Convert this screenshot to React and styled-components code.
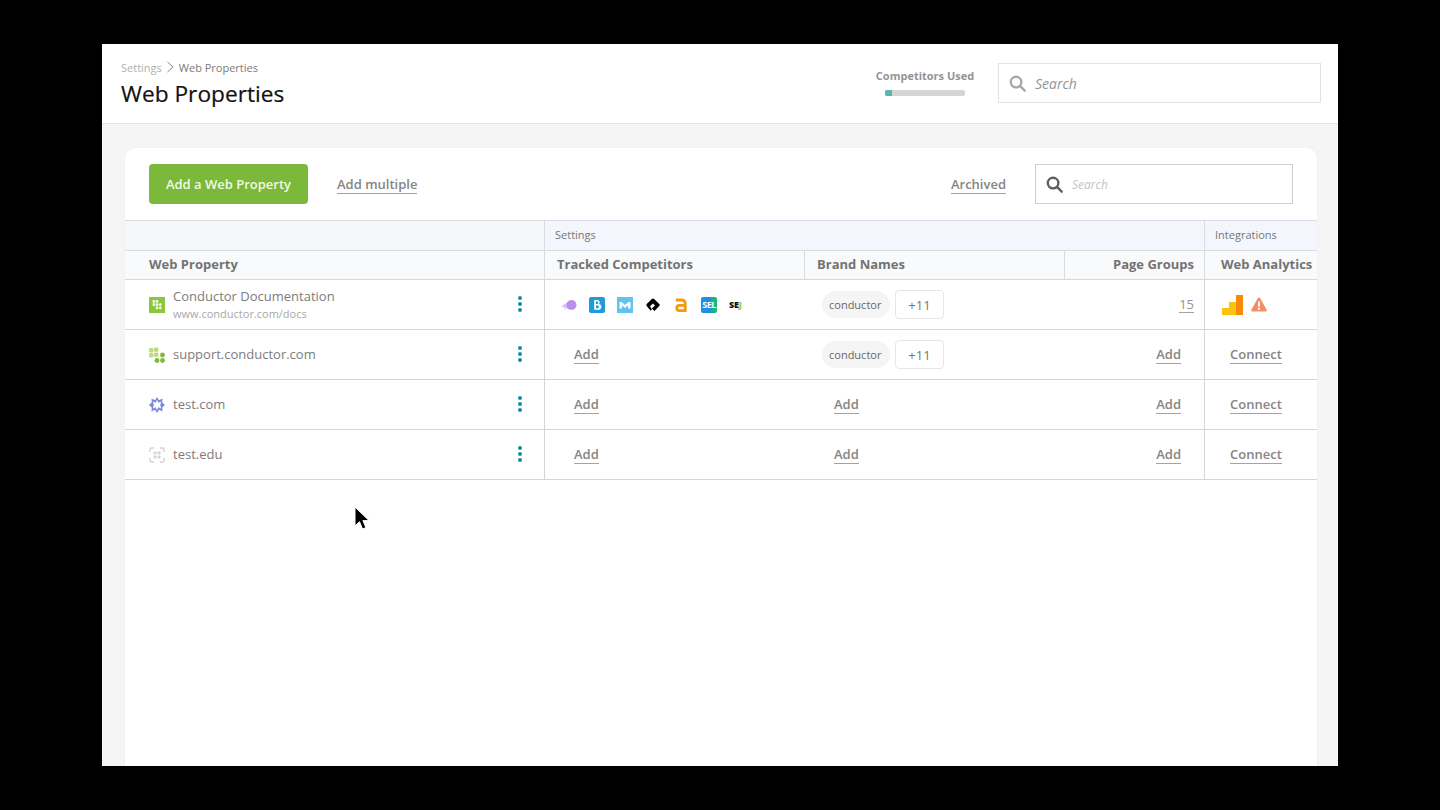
import React from 'react';
import styled, { createGlobalStyle } from 'styled-components';

const GlobalStyle = createGlobalStyle`
  html, body {
    margin: 0;
    height: 100%;
    background: #000;
    overflow: hidden;
    font-family: "Open Sans", "Liberation Sans", sans-serif;
    -webkit-font-smoothing: antialiased;
  }
  * { box-sizing: border-box; }
`;

const COLUMNS = '419px 260px 260px 140px 113px';

const rows = [
  { icon: 'square', name: 'Conductor Documentation', url: 'www.conductor.com/docs', competitors: true, brand: true, groups: '15', analytics: true },
  { icon: 'dots', name: 'support.conductor.com', brand: true },
  { icon: 'star', name: 'test.com' },
  { icon: 'frame', name: 'test.edu' },
];

const SearchIcon = ({ color, size }) => (
  <svg width={size} height={size} viewBox="0 0 18 18" fill="none" stroke={color} strokeWidth="2.5">
    <circle cx="7.5" cy="7.5" r="5.6" />
    <path d="M11.6 11.6l5 5" strokeLinecap="round" />
  </svg>
);

const PropertyIcon = ({ kind }) => {
  if (kind === 'square') {
    return (
      <svg width="16" height="16" viewBox="0 0 16 16">
        <rect width="16" height="16" fill="#8cc63f" />
        <g fill="#f1f8e4">
          <rect x="3.5" y="3" width="2.7" height="2.7" rx="0.7" />
          <rect x="6.7" y="3" width="2.7" height="2.7" rx="0.7" />
          <rect x="3.5" y="6.2" width="2.7" height="2.7" rx="0.7" />
          <rect x="6.7" y="6.2" width="2.7" height="2.7" rx="0.7" />
          <circle cx="11.3" cy="7.7" r="1.4" />
          <circle cx="8" cy="10.9" r="1.4" />
          <circle cx="11.3" cy="10.9" r="1.4" />
        </g>
      </svg>
    );
  }
  if (kind === 'dots') {
    return (
      <svg width="16" height="16" viewBox="0 0 16 16">
        <g fill="#bedb7c">
          <rect x="0" y="1" width="4.5" height="4.5" rx="1.4" />
          <rect x="5" y="0.5" width="4.5" height="4.5" rx="1.4" />
          <rect x="0" y="6" width="4.5" height="4.5" rx="1.4" />
          <rect x="5" y="5.5" width="4.5" height="4.5" rx="1.4" />
        </g>
        <g fill="#7fb83a">
          <circle cx="13.5" cy="8" r="2.4" />
          <circle cx="8" cy="13.5" r="2.4" />
          <circle cx="13.5" cy="13.5" r="2.4" />
        </g>
      </svg>
    );
  }
  if (kind === 'star') {
    return (
      <svg width="16" height="16" viewBox="0 0 16 16">
        <path d="M8 0l2 3.200L13.500 1.500l-.2 4L16 8l-2.700 2.500.2 4L10 12.800 8 16l-2-3.200-3.500 1.700.2-4L0 8l2.700-2.500-.2-4L6 3.200z" fill="#7a89dc" />
        <path d="M8 2.800l1.300 3 2.900-1.300-1 3.500 1 3.500-2.900-1.300-1.300 3-1.300-3-2.900 1.300 1-3.500-1-3.500 2.900 1.300z" fill="#fff" />
      </svg>
    );
  }
  return (
    <svg width="16" height="16" viewBox="0 0 16 16">
      <path d="M1 5V2.500A1.500 1.500 0 0 1 2.500 1H5M11 1h2.500A1.500 1.500 0 0 1 15 2.500V5M15 11v2.500a1.500 1.500 0 0 1-1.500 1.500H11M5 15H2.500A1.500 1.500 0 0 1 1 13.500V11" fill="none" stroke="#d2d2d2" strokeWidth="1.4" />
      <g fill="#d6d6d6">
        <rect x="4.500" y="4.500" width="3" height="3" rx="0.8" />
        <rect x="8.500" y="4.500" width="3" height="3" rx="0.8" />
        <rect x="4.500" y="8.500" width="3" height="3" rx="0.8" />
        <rect x="8.500" y="8.500" width="3" height="3" rx="0.8" />
      </g>
    </svg>
  );
};

const CompetitorIcons = () => (
  <IconRow>
    <svg width="16" height="16" viewBox="0 0 16 16">
      <path d="M0 9.500l6-4 3 1v5l-4-.2-2 1.700.8-2.500z" fill="#d9c2f5" />
      <circle cx="10.500" cy="8" r="5" fill="#b78ff0" />
    </svg>
    <svg width="16" height="16" viewBox="0 0 16 16">
      <rect width="16" height="16" rx="2" fill="#1f9bd7" />
      <path d="M5.200 3h3.300a2.300 2.300 0 0 1 1.500 4 2.600 2.600 0 0 1-1.200 5.800H5.200zM7 4.600v2.300h1.200a1.150 1.150 0 0 0 0-2.300zM7 8.400v2.800h1.500a1.400 1.400 0 0 0 0-2.800z" fill="#fff" fillRule="evenodd" />
    </svg>
    <svg width="16" height="16" viewBox="0 0 16 16">
      <rect width="16" height="16" fill="#62c3ee" />
      <path d="M2.500 11.500V5h2.200L8 8l3.300-3h2.200v6.500h-2.400V8.300L8 11 4.900 8.300v3.200z" fill="#fff" />
    </svg>
    <svg width="16" height="16" viewBox="0 0 16 16">
      <path d="M8 1.500c.4 0 .8.2 1.100.5l5.200 5c.6.600.6 1.400 0 2l-4.800 5-2.600-2.500L10 8.500 8 6.500 5 9.200l2 3.300-1.600 1L1.700 9c-.5-.6-.5-1.300 0-1.900L6.900 2c.3-.3.700-.5 1.100-.5z" fill="#000" />
    </svg>
    <svg width="16" height="16" viewBox="0 0 16 16" fill="none" stroke="#f7980f" strokeWidth="2.800">
      <path d="M2.800 3h6.200a3.200 3.200 0 0 1 3.200 3.200V15" />
      <path d="M12 8.300H6.500a2.700 2.700 0 0 0 0 5.400H12" />
    </svg>
    <SelBadge>SEL</SelBadge>
    <SejMark>SE<em>J</em></SejMark>
  </IconRow>
);

const AnalyticsIcons = () => (
  <IconRow $gap={8}>
    <svg width="21" height="20" viewBox="0 0 21 20">
      <rect x="0" y="13" width="7" height="7" fill="#fcc30b" />
      <rect x="7" y="7" width="7" height="13" fill="#fcc30b" />
      <rect x="14" y="0" width="7" height="20" fill="#f58a0b" />
    </svg>
    <svg width="16" height="15" viewBox="0 0 16 15">
      <path d="M8 .5a1.300 1.300 0 0 1 1.100.6l6.500 11.600a1.300 1.300 0 0 1-1.100 1.800h-13a1.300 1.300 0 0 1-1.100-1.800L6.900 1.100A1.300 1.300 0 0 1 8 .5z" fill="#f58c66" />
      <rect x="7" y="4.500" width="2" height="5.200" fill="#fff" />
      <rect x="7" y="10.800" width="2" height="2" fill="#fff" />
    </svg>
  </IconRow>
);

export default function App() {
  return (
    <>
      <GlobalStyle />
      <Frame>
        <Header>
          <TitleBlock>
            <Breadcrumb>
              <Crumb>Settings</Crumb>
              <svg width="9" height="12" viewBox="0 0 9 12" fill="none" stroke="#8a8a8a">
                <path d="M1.500 1l5.500 5-5.500 5" />
              </svg>
              <Crumb $current>Web Properties</Crumb>
            </Breadcrumb>
            <PageTitle>Web Properties</PageTitle>
          </TitleBlock>
          <HeaderRight>
            <Usage>
              <UsageLabel>Competitors Used</UsageLabel>
              <UsageTrack><UsageFill style={{ width: `${(7 / 80) * 100}%` }} /></UsageTrack>
            </Usage>
            <HeaderSearch>
              <SearchIcon color="#a8a8a8" size={17} />
              <HeaderSearchText>Search</HeaderSearchText>
            </HeaderSearch>
          </HeaderRight>
        </Header>
        <Content>
          <Card>
            <Toolbar>
              <ToolbarGroup>
                <PrimaryButton>Add a Web Property</PrimaryButton>
                <ToolbarLink>Add multiple</ToolbarLink>
              </ToolbarGroup>
              <ToolbarGroup>
                <ToolbarLink>Archived</ToolbarLink>
                <CardSearch>
                  <SearchIcon color="#5f5f5f" size={17} />
                  <CardSearchText>Search</CardSearchText>
                </CardSearch>
              </ToolbarGroup>
            </Toolbar>
            <GroupRow>
              <GroupCell $plain />
              <GroupCell $span={3}>Settings</GroupCell>
              <GroupCell>Integrations</GroupCell>
            </GroupRow>
            <ColumnRow>
              <ColumnCell $pad="0 0 2px 24px">Web Property</ColumnCell>
              <ColumnCell $pad="0 0 2px 12px">Tracked Competitors</ColumnCell>
              <ColumnCell $pad="0 0 2px 12px">Brand Names</ColumnCell>
              <ColumnCell $pad="0 10px 2px 0" $right>Page Groups</ColumnCell>
              <ColumnCell $pad="0 0 2px 16px">Web Analytics</ColumnCell>
            </ColumnRow>
            {rows.map((row) => (
              <Row key={row.name}>
                <PropertyCell>
                  <PropertyIcon kind={row.icon} />
                  <PropertyText>
                    <PropertyName>{row.name}</PropertyName>
                    {row.url && <PropertyUrl>{row.url}</PropertyUrl>}
                  </PropertyText>
                  <Kebab><i /><i /><i /></Kebab>
                </PropertyCell>
                <DataCell $pad={row.competitors ? '0 0 0 16px' : '0 0 0 29px'} $first>
                  {row.competitors ? <CompetitorIcons /> : <ActionLink>Add</ActionLink>}
                </DataCell>
                <DataCell $pad={row.brand ? '0 0 0 18px' : '0 0 0 30px'}>
                  {row.brand ? (
                    <>
                      <BrandPill>conductor</BrandPill>
                      <MoreBox>+11</MoreBox>
                    </>
                  ) : (
                    <ActionLink>Add</ActionLink>
                  )}
                </DataCell>
                <DataCell $pad={row.groups ? '0 10px 0 0' : '0 23px 0 0'} $right>
                  {row.groups ? <CountLink>{row.groups}</CountLink> : <ActionLink>Add</ActionLink>}
                </DataCell>
                <DataCell $pad={row.analytics ? '0 0 0 17px' : '0 0 0 25px'} $first>
                  {row.analytics ? <AnalyticsIcons /> : <ActionLink>Connect</ActionLink>}
                </DataCell>
              </Row>
            ))}
          </Card>
        </Content>
        <Pointer width="17" height="26" viewBox="0 0 17 26">
          <path d="M1 1v19l4.500-4.300 3 7.300 3.400-1.400-3-7H15z" fill="#000" stroke="#fff" strokeWidth="1" />
        </Pointer>
      </Frame>
    </>
  );
}

const Frame = styled.div`
  position: relative;
  display: flex;
  flex-direction: column;
  width: 1236px;
  height: 722px;
  margin: 44px 0 0 102px;
  background: #f5f5f5;
  overflow: hidden;
`;

const Header = styled.header`
  display: flex;
  justify-content: space-between;
  align-items: flex-start;
  height: 80px;
  padding: 0 17px 0 19px;
  background: #fff;
  border-bottom: 1px solid #e2e2e2;
`;

const TitleBlock = styled.div`
  display: flex;
  flex-direction: column;
  padding-top: 15px;
`;

const Breadcrumb = styled.div`
  display: flex;
  align-items: center;
  gap: 4px;
  height: 16px;
`;

const Crumb = styled.span`
  font-size: 11px;
  color: ${(props) => (props.$current ? '#7b7b7b' : '#b0b0b0')};
`;

const PageTitle = styled.h1`
  margin: 4px 0 0;
  font-size: 22.7px;
  line-height: 30px;
  font-weight: 400;
  color: #111;
  -webkit-text-stroke: 0.2px #111;
`;

const HeaderRight = styled.div`
  display: flex;
  align-items: flex-start;
  gap: 23px;
  padding-top: 19px;
`;

const Usage = styled.div`
  display: flex;
  flex-direction: column;
  align-items: center;
  width: 100px;
  padding-top: 5px;
`;

const UsageLabel = styled.div`
  font-size: 11px;
  line-height: 16px;
  font-weight: 700;
  color: #949494;
  white-space: nowrap;
`;

const UsageTrack = styled.div`
  width: 80px;
  height: 6px;
  margin-top: 6px;
  border-radius: 2px;
  background: #d5d5d5;
  overflow: hidden;
`;

const UsageFill = styled.div`
  height: 100%;
  background: #5fb3ad;
`;

const HeaderSearch = styled.div`
  display: flex;
  align-items: center;
  gap: 9px;
  width: 323px;
  height: 40px;
  padding-left: 10px;
  border: 1px solid #e1e1e6;
  background: #fff;
`;

const HeaderSearchText = styled.span`
  font-size: 14px;
  font-style: italic;
  color: #949494;
`;

const Content = styled.main`
  display: flex;
  flex: 1;
  min-height: 0;
  padding: 24px 21px 0 23px;
`;

const Card = styled.section`
  flex: 1;
  background: #fff;
  border-radius: 10px 10px 0 0;
  box-shadow: 0 0 2px rgba(0, 0, 0, 0.06);
`;

const Toolbar = styled.div`
  display: flex;
  justify-content: space-between;
  align-items: center;
  height: 72px;
  padding: 0 24px;
`;

const ToolbarGroup = styled.div`
  display: flex;
  align-items: center;
  gap: 29px;
`;

const PrimaryButton = styled.button`
  width: 159px;
  height: 40px;
  padding: 0;
  border: 0;
  border-radius: 4px;
  background: #7cb93a;
  color: #f1f8e6;
  font-family: inherit;
  font-size: 13px;
  font-weight: 600;
`;

const ToolbarLink = styled.a`
  padding-top: 2px;
  border-bottom: 1px solid #a3a3a3;
  color: #858585;
  font-size: 13px;
  line-height: 17px;
  font-weight: 600;
`;

const CardSearch = styled.div`
  display: flex;
  align-items: center;
  gap: 9px;
  width: 258px;
  height: 40px;
  padding-left: 10px;
  border: 1px solid #cfcfcf;
  background: #fff;
`;

const CardSearchText = styled.span`
  font-size: 12px;
  font-style: italic;
  color: #c4c4c4;
`;

const GroupRow = styled.div`
  display: grid;
  grid-template-columns: ${COLUMNS};
  height: 30px;
  border-top: 1px solid #d8dbe0;
`;

const GroupCell = styled.div`
  display: flex;
  align-items: center;
  grid-column: span ${(props) => props.$span || 1};
  padding: 0 0 2px 10px;
  border-left: ${(props) => (props.$plain ? '0' : '1px solid #d8dbe0')};
  background: ${(props) => (props.$plain ? '#f6f7f8' : '#f3f6fc')};
  color: #777;
  font-size: 11px;
`;

const ColumnRow = styled.div`
  display: grid;
  grid-template-columns: ${COLUMNS};
  height: 30px;
  border-top: 1px solid #d8dbe0;
  border-bottom: 1px solid #d8d8d8;
  background: #f9fafc;
`;

const ColumnCell = styled.div`
  display: flex;
  align-items: center;
  justify-content: ${(props) => (props.$right ? 'flex-end' : 'flex-start')};
  padding: ${(props) => props.$pad};
  border-left: 1px solid #d8dbe0;
  color: #737373;
  font-size: 13px;
  font-weight: 700;
  white-space: nowrap;

  &:first-child {
    border-left: 0;
  }
`;

const Row = styled.div`
  display: grid;
  grid-template-columns: ${COLUMNS};
  height: 50px;
  border-bottom: 1px solid #d6d6d6;
`;

const PropertyCell = styled.div`
  display: flex;
  align-items: center;
  gap: 8px;
  padding: 0 22px 0 24px;
`;

const PropertyText = styled.div`
  display: flex;
  flex: 1;
  flex-direction: column;
  min-width: 0;
  padding-bottom: 1px;
`;

const PropertyName = styled.span`
  margin-bottom: 1px;
  color: #7c7c7c;
  font-size: 13px;
  line-height: 18px;
`;

const PropertyUrl = styled.span`
  color: #a8a8a8;
  font-size: 11px;
  line-height: 15px;
`;

const Kebab = styled.div`
  display: flex;
  flex-direction: column;
  gap: 2px;
  margin-bottom: 1px;

  i {
    display: block;
    width: 4px;
    height: 4px;
    border-radius: 50%;
    background: #118ea5;
  }
`;

const DataCell = styled.div`
  display: flex;
  align-items: center;
  justify-content: ${(props) => (props.$right ? 'flex-end' : 'flex-start')};
  gap: 5px;
  padding: ${(props) => props.$pad};
  border-left: ${(props) => (props.$first ? '1px solid #d6d6d6' : '0')};
`;

const IconRow = styled.div`
  display: flex;
  align-items: center;
  gap: ${(props) => props.$gap || 12}px;
`;

const SelBadge = styled.span`
  display: flex;
  align-items: center;
  justify-content: center;
  width: 16px;
  height: 16px;
  border-radius: 2px;
  background: linear-gradient(90deg, #1f8fe0 62%, #17b877 62%);
  color: #fff;
  font-size: 9px;
  font-weight: 700;
  letter-spacing: -0.6px;
  overflow: hidden;
`;

const SejMark = styled.span`
  width: 16px;
  color: #111;
  font-size: 9px;
  font-weight: 800;
  letter-spacing: -0.2px;
  white-space: nowrap;

  em {
    color: #a5c93d;
    font-style: normal;
  }
`;

const ActionLink = styled.a`
  padding-bottom: 1px;
  border-bottom: 1px solid #a3a3a3;
  color: #858585;
  font-size: 13px;
  line-height: 16px;
  font-weight: 600;
`;

const CountLink = styled.a`
  border-bottom: 1px solid #a3a3a3;
  color: #949494;
  font-size: 13px;
  line-height: 16px;
`;

const BrandPill = styled.span`
  display: flex;
  align-items: center;
  height: 27px;
  padding: 0 7px 0 7px;
  min-width: 68px;
  border-radius: 14px;
  background: #f5f5f5;
  color: #666;
  font-size: 11px;
`;

const MoreBox = styled.span`
  display: flex;
  align-items: center;
  justify-content: center;
  width: 49px;
  height: 29px;
  border: 1px solid #e6e6e6;
  border-radius: 4px;
  color: #777;
  font-size: 13px;
`;

const Pointer = styled.svg`
  position: absolute;
  left: 252px;
  top: 462px;
`;
